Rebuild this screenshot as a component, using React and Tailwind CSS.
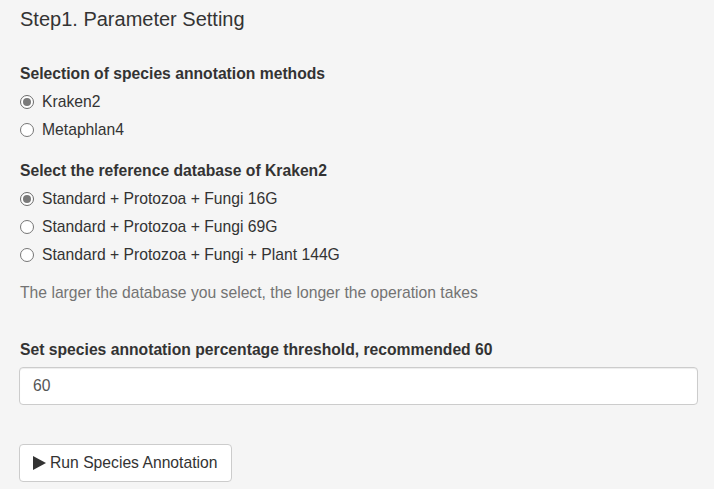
const methods = ["Kraken2", "Metaphlan4"];
const databases = [
  "Standard + Protozoa + Fungi 16G",
  "Standard + Protozoa + Fungi 69G",
  "Standard + Protozoa + Fungi + Plant 144G",
];

function Radio({ label, checked }) {
  return (
    <label className="flex items-center h-[28px] leading-[28px]">
      <span
        className={
          "w-[14px] h-[14px] rounded-full border flex items-center justify-center bg-white mr-[8px] " +
          (checked ? "border-[#6b6b6b]" : "border-[#767676]")
        }
      >
        {checked && <span className="w-[8px] h-[8px] rounded-full bg-[#7a7a7a]" />}
      </span>
      <span>{label}</span>
    </label>
  );
}

export default function App() {
  return (
    <div
      className="w-[714px] h-[489px] bg-[#f5f5f5] text-[#333] text-[15.7px] overflow-hidden pl-[20px] pr-[16px] pt-[8px]"
      style={{ fontFamily: '"Liberation Sans", Arial, sans-serif' }}
    >
      <h3 className="text-[20px] leading-[22px] font-normal">Step1. Parameter Setting</h3>

      <div className="mt-[33px]">
        <p className="font-bold leading-[22px]">Selection of species annotation methods</p>
        <div className="mt-[3px]">
          {methods.map((m, i) => (
            <Radio key={m} label={m} checked={i === 0} />
          ))}
        </div>
      </div>

      <div className="mt-[16px]">
        <p className="font-bold leading-[22px]">Select the reference database of Kraken2</p>
        <div className="mt-[3px]">
          {databases.map((d, i) => (
            <Radio key={d} label={d} checked={i === 0} />
          ))}
        </div>
        <p className="mt-[13px] leading-[22px] text-[#737373]">
          The larger the database you select, the longer the operation takes
        </p>
      </div>

      <div className="mt-[35px]">
        <p className="font-bold leading-[22px]">Set species annotation percentage threshold, recommended 60</p>
        <input
          defaultValue="60"
          className="mt-[6px] -ml-px w-[679px] h-[38px] bg-white border border-[#ccc] rounded-[4px] px-[13px] text-[#555] outline-none shadow-[inset_0_1px_1px_rgba(0,0,0,0.075)]"
        />
      </div>

      <button className="mt-[39px] -ml-px h-[38px] w-[213px] bg-white border border-[#ccc] rounded-[4px] flex items-center pl-[13px] text-[#333]">
        <svg width="13" height="14" viewBox="0 0 13 14" className="mr-[4px]">
          <path d="M0 0 L13 7 L0 14 Z" fill="#333" />
        </svg>
        Run Species Annotation
      </button>
    </div>
  );
}
